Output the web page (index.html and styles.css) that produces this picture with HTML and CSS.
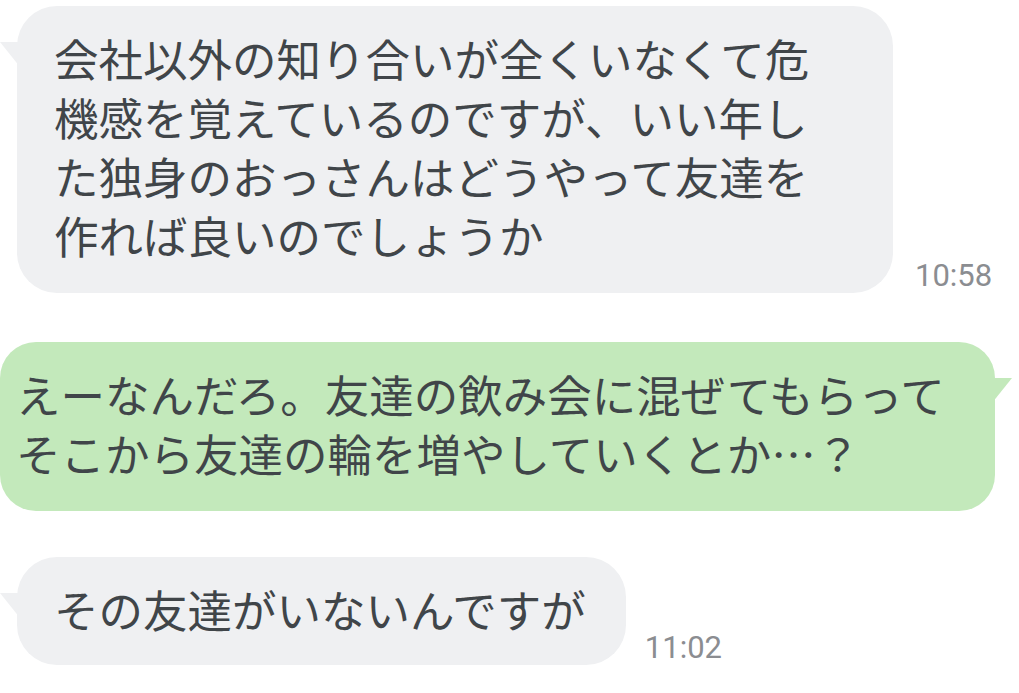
FILE: index.html
```html
<!DOCTYPE html>
<html lang="ja">
<head>
<meta charset="utf-8">
<title>chat</title>
<link rel="stylesheet" href="styles.css">
</head>
<body>
<div class="chat">
  <div class="row in first">
    <div class="bubble gray b1">会社以外の知り合いが全くいなくて危<br>機感を覚えているのですが、いい年し<br>た独身のおっさんはどうやって友達を<br>作れば良いのでしょうか</div>
    <span class="time">10:58</span>
  </div>
  <div class="row out">
    <div class="bubble green b2">えーなんだろ。友達の飲み会に混ぜてもらって<br>そこから友達の輪を増やしていくとか…？</div>
  </div>
  <div class="row in">
    <div class="bubble gray b3">その友達がいないんですが</div>
    <span class="time">11:02</span>
  </div>
</div>
</body>
</html>
```

FILE: styles.css
```css
html, body {
  margin: 0;
  padding: 0;
  background: #ffffff;
}
.chat {
  display: flex;
  flex-direction: column;
  padding-top: 6px;
  width: 1019px;
  height: 693px;
  overflow: hidden;
  box-sizing: border-box;
}
.row {
  display: flex;
  align-items: flex-end;
}
.row.in {
  padding-left: 17px;
  gap: 22px;
}
.row.out {
  justify-content: flex-end;
  padding-right: 24px;
  margin-top: 49px;
}
.row.out + .row.in {
  margin-top: 46px;
  gap: 19px;
}
.bubble {
  position: relative;
  font-family: "Noto Sans CJK JP", "Noto Sans", sans-serif;
  font-size: 44.5px;
  line-height: 59px;
  color: #404549;
  white-space: nowrap;
  border-radius: 40px;
  box-sizing: border-box;
}
.gray {
  background: #eff0f2;
}
.green {
  background: #c3e9bb;
  border-radius: 36px;
}
.b1 {
  width: 876px;
  padding: 22px 37px 29px 37px;
}
.b2 {
  width: 995px;
  padding: 22px 20px 29px 16px;
}
.b3 {
  padding: 22px 40px 27px 37px;
}
.gray::before {
  content: "";
  position: absolute;
  left: -17px;
  top: 36px;
  width: 24px;
  height: 21px;
  background: #eff0f2;
  clip-path: polygon(0 0, 100% 0, 100% 100%, 70% 100%);
}
.green::after {
  content: "";
  position: absolute;
  right: -17px;
  top: 36px;
  width: 24px;
  height: 21px;
  background: #c3e9bb;
  clip-path: polygon(0 0, 100% 0, 30% 100%, 0 100%);
}
.time {
  font-family: Roboto, "Liberation Sans", sans-serif;
  font-size: 31px;
  line-height: 31px;
  color: #8b8d91;
  padding-bottom: 2px;
}
```
